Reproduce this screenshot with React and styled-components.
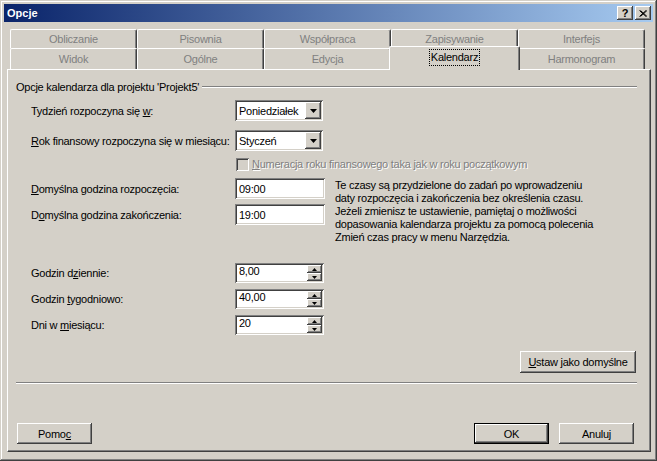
import React from 'react'
import styled, { createGlobalStyle } from 'styled-components'

const GlobalStyle = createGlobalStyle`
  html, body {
    margin: 0;
    padding: 0;
    background: #d4d0c8;
  }
  body {
    font-family: "Liberation Sans", Arial, sans-serif;
    font-size: 11px;
    letter-spacing: -0.25px;
    color: #000;
  }
  * { box-sizing: border-box; }
`

const raised = `
  box-shadow: inset -1px -1px #404040, inset 1px 1px #ffffff,
    inset -2px -2px #808080, inset 2px 2px #d4d0c8;
`

const sunken = `
  box-shadow: inset 1px 1px #808080, inset -1px -1px #ffffff,
    inset 2px 2px #404040, inset -2px -2px #d4d0c8;
`

const Window = styled.div`
  width: 657px;
  height: 461px;
  background: #d4d0c8;
  padding: 4px;
  display: flex;
  flex-direction: column;
  box-shadow: inset -1px -1px #404040, inset 1px 1px #d4d0c8,
    inset -2px -2px #808080, inset 2px 2px #ffffff;
`

const TitleBar = styled.div`
  height: 18px;
  display: flex;
  align-items: center;
  padding: 0 2px 0 3px;
  background: linear-gradient(to right, #0a246a, #a6caf0);
`

const TitleText = styled.div`
  flex: 1;
  color: #fff;
  font-weight: bold;
  font-size: 11px;
  letter-spacing: 0;
`

const TitleButton = styled.div`
  width: 16px;
  height: 14px;
  margin-left: ${p => p.$gap || 0}px;
  background: #d4d0c8;
  display: flex;
  align-items: center;
  justify-content: center;
  font-weight: bold;
  font-size: 11px;
  line-height: 1;
  ${raised}
`

const Body = styled.div`
  flex: 1;
  display: flex;
  flex-direction: column;
  padding: 7px 2px 5px 3px;
`

const TabRow = styled.div`
  display: flex;
  align-items: flex-start;
  height: ${p => p.$h}px;
  padding-left: 3px;
`

const Tab = styled.div`
  width: ${p => (p.$selected ? 131 : p.$w || 127)}px;
  height: ${p => (p.$selected ? 24 : p.$h)}px;
  margin: ${p => (p.$selected ? '-2px -2px -1px -2px' : '0')};
  position: relative;
  z-index: ${p => (p.$selected ? 2 : 1)};
  background: #d4d0c8;
  border-top: 1px solid #fff;
  border-left: 1px solid #fff;
  border-right: 1px solid #404040;
  border-radius: 2px 2px 0 0;
  box-shadow: inset -1px 0 #808080;
  display: flex;
  align-items: center;
  justify-content: center;
  padding-bottom: ${p => (p.$selected ? 2 : 0)}px;
  color: ${p => (p.$selected ? '#000' : '#808080')};
`

const Focus = styled.span`
  outline: 1px dotted #000;
  outline-offset: 0;
  padding: 1px 1px 2px;
`

const Panel = styled.div`
  flex: 1;
  display: flex;
  flex-direction: column;
  border-top: 1px solid #fff;
  border-left: 1px solid #fff;
  border-right: 1px solid #404040;
  border-bottom: 1px solid #404040;
  box-shadow: inset -1px -1px #808080;
  padding: 10px 13px 0 8px;
`

const GroupHeader = styled.div`
  display: flex;
  align-items: center;
  height: 13px;
  gap: 3px;
`

const Etched = styled.div`
  flex: ${p => (p.$grow ? 1 : 'none')};
  height: 2px;
  border-top: 1px solid #808080;
  border-bottom: 1px solid #fff;
  margin-top: ${p => p.$top || 0}px;
`

const FieldRow = styled.div`
  display: flex;
  align-items: center;
  margin-top: ${p => p.$top || 0}px;
  padding-left: 15px;
`

const FieldLabel = styled.div`
  width: 204px;
  white-space: nowrap;
`

const ComboBox = styled.div`
  width: 88px;
  height: 21px;
  background: #fff;
  padding: 2px;
  display: flex;
  align-items: center;
  ${sunken}
`

const FieldText = styled.div`
  flex: 1;
  padding-left: 2px;
  white-space: nowrap;
`

const ArrowButton = styled.div`
  width: 16px;
  height: 17px;
  background: #d4d0c8;
  display: flex;
  align-items: center;
  justify-content: center;
  ${raised}
`

const TextBox = styled.div`
  width: 90px;
  height: 21px;
  background: #fff;
  padding: 2px 2px 2px 4px;
  display: flex;
  align-items: center;
  ${sunken}
`

const CheckRow = styled.div`
  display: flex;
  align-items: center;
  margin-top: ${p => p.$top || 0}px;
  padding-left: 220px;
  height: 14px;
`

const CheckBox = styled.div`
  width: 13px;
  height: 13px;
  background: #d4d0c8;
  ${sunken}
`

const Disabled = styled.span`
  margin-left: 3px;
  color: #808080;
  text-shadow: 1px 1px 0 #fff;
  white-space: nowrap;
`

const TimeBlock = styled.div`
  display: flex;
  margin-top: ${p => p.$top || 0}px;
`

const TimeFields = styled.div`
  display: flex;
  flex-direction: column;
  gap: 5px;
`

const Note = styled.div`
  margin-left: 10px;
  line-height: 13px;
  margin-top: 1px;
  white-space: nowrap;
`

const SpinField = styled.div`
  width: 89px;
  height: 20px;
  background: #fff;
  padding: 2px;
  display: flex;
  ${sunken}
`

const SpinButtons = styled.div`
  width: 15px;
  display: flex;
  flex-direction: column;
`

const SpinHalf = styled.div`
  flex: 1;
  background: #d4d0c8;
  display: flex;
  align-items: center;
  justify-content: center;
  ${raised}
`

const ButtonRow = styled.div`
  display: flex;
  justify-content: ${p => p.$justify || 'flex-start'};
  align-items: center;
  margin-top: ${p => p.$top || 0}px;
  gap: 10px;
`

const Button = styled.div`
  width: ${p => p.$w || 75}px;
  height: ${p => p.$h || 21}px;
  margin: ${p => p.$margin || '0'};
  background: #d4d0c8;
  display: flex;
  align-items: center;
  justify-content: center;
  white-space: nowrap;
  ${p => (p.$default
    ? `border: 1px solid #000;
       box-shadow: inset -1px -1px #404040, inset 1px 1px #ffffff, inset -2px -2px #808080;`
    : raised)}
`

const Spacer = styled.div`
  flex: 1;
`

const Down = ({ w = 7, h = 4 }) => (
  <svg width={w} height={h} viewBox={`0 0 ${w} ${h}`}>
    <polygon points={`0,0 ${w},0 ${w / 2},${h}`} fill="#000" />
  </svg>
)

const Up = ({ w = 5, h = 3 }) => (
  <svg width={w} height={h} viewBox={`0 0 ${w} ${h}`}>
    <polygon points={`0,${h} ${w},${h} ${w / 2},0`} fill="#000" />
  </svg>
)

const Combo = ({ value }) => (
  <ComboBox>
    <FieldText>{value}</FieldText>
    <ArrowButton><Down /></ArrowButton>
  </ComboBox>
)

const Spin = ({ value }) => (
  <SpinField>
    <FieldText>{value}</FieldText>
    <SpinButtons>
      <SpinHalf><Up /></SpinHalf>
      <SpinHalf><Down w={5} h={3} /></SpinHalf>
    </SpinButtons>
  </SpinField>
)

export default function App() {
  return (
    <Window>
      <GlobalStyle />
      <TitleBar>
        <TitleText>Opcje</TitleText>
        <TitleButton>?</TitleButton>
        <TitleButton $gap={2}>
          <svg width="8" height="7" viewBox="0 0 8 7">
            <path d="M0.5 0.5 L7 6.5 M1.5 0.5 L8 6.5 M7 0.5 L0.5 6.5 M8 0.5 L1.5 6.5" stroke="#000" strokeWidth="1" />
          </svg>
        </TitleButton>
      </TitleBar>

      <Body>
        <TabRow $h={19}>
          <Tab $h={19}>Obliczanie</Tab>
          <Tab $h={19}>Pisownia</Tab>
          <Tab $h={19}>Współpraca</Tab>
          <Tab $h={19}>Zapisywanie</Tab>
          <Tab $h={19}>Interfejs</Tab>
        </TabRow>
        <TabRow $h={21}>
          <Tab $h={21}>Widok</Tab>
          <Tab $h={21}>Ogólne</Tab>
          <Tab $h={21}>Edycja</Tab>
          <Tab $selected><Focus>Kalendarz</Focus></Tab>
          <Tab $h={21}>Harmonogram</Tab>
        </TabRow>

        <Panel>
          <GroupHeader>
            <span>Opcje kalendarza dla projektu 'Projekt5'</span>
            <Etched $grow />
          </GroupHeader>

          <FieldRow $top={7}>
            <FieldLabel>Tydzień rozpoczyna się <u>w</u>:</FieldLabel>
            <Combo value="Poniedziałek" />
          </FieldRow>
          <FieldRow $top={9}>
            <FieldLabel><u>R</u>ok finansowy rozpoczyna się w miesiącu:</FieldLabel>
            <Combo value="Styczeń" />
          </FieldRow>

          <CheckRow $top={6}>
            <CheckBox />
            <Disabled><u>N</u>umeracja roku finansowego taka jak w roku początkowym</Disabled>
          </CheckRow>

          <TimeBlock $top={7}>
            <TimeFields>
              <FieldRow>
                <FieldLabel><u>D</u>omyślna godzina rozpoczęcia:</FieldLabel>
                <TextBox>09:00</TextBox>
              </FieldRow>
              <FieldRow>
                <FieldLabel>D<u>o</u>myślna godzina zakończenia:</FieldLabel>
                <TextBox>19:00</TextBox>
              </FieldRow>
            </TimeFields>
            <Note>
              Te czasy są przydzielone do zadań po wprowadzeniu<br />
              daty rozpoczęcia i zakończenia bez określenia czasu.<br />
              Jeżeli zmienisz te ustawienie, pamiętaj o możliwości<br />
              dopasowania kalendarza projektu za pomocą polecenia<br />
              Zmień czas pracy w menu Narzędzia.
            </Note>
          </TimeBlock>

          <FieldRow $top={19}>
            <FieldLabel>Godzin d<u>z</u>iennie:</FieldLabel>
            <Spin value="8,00" />
          </FieldRow>
          <FieldRow $top={6}>
            <FieldLabel>Godzin <u>t</u>ygodniowo:</FieldLabel>
            <Spin value="40,00" />
          </FieldRow>
          <FieldRow $top={6}>
            <FieldLabel>Dni w <u>m</u>iesiącu:</FieldLabel>
            <Spin value="20" />
          </FieldRow>

          <ButtonRow $justify="flex-end" $top={16}>
            <Button $w={116} $h={22} $margin="0 1px 0 0"><u>U</u>staw jako domyślne</Button>
          </ButtonRow>

          <Etched $top={9} />

          <ButtonRow $top={39}>
            <Button $margin="0 0 0 1px">Pomo<u>c</u></Button>
            <Spacer />
            <Button $default>OK</Button>
            <Button $margin="0 3px 0 0">Anuluj</Button>
          </ButtonRow>
        </Panel>
      </Body>
    </Window>
  )
}
